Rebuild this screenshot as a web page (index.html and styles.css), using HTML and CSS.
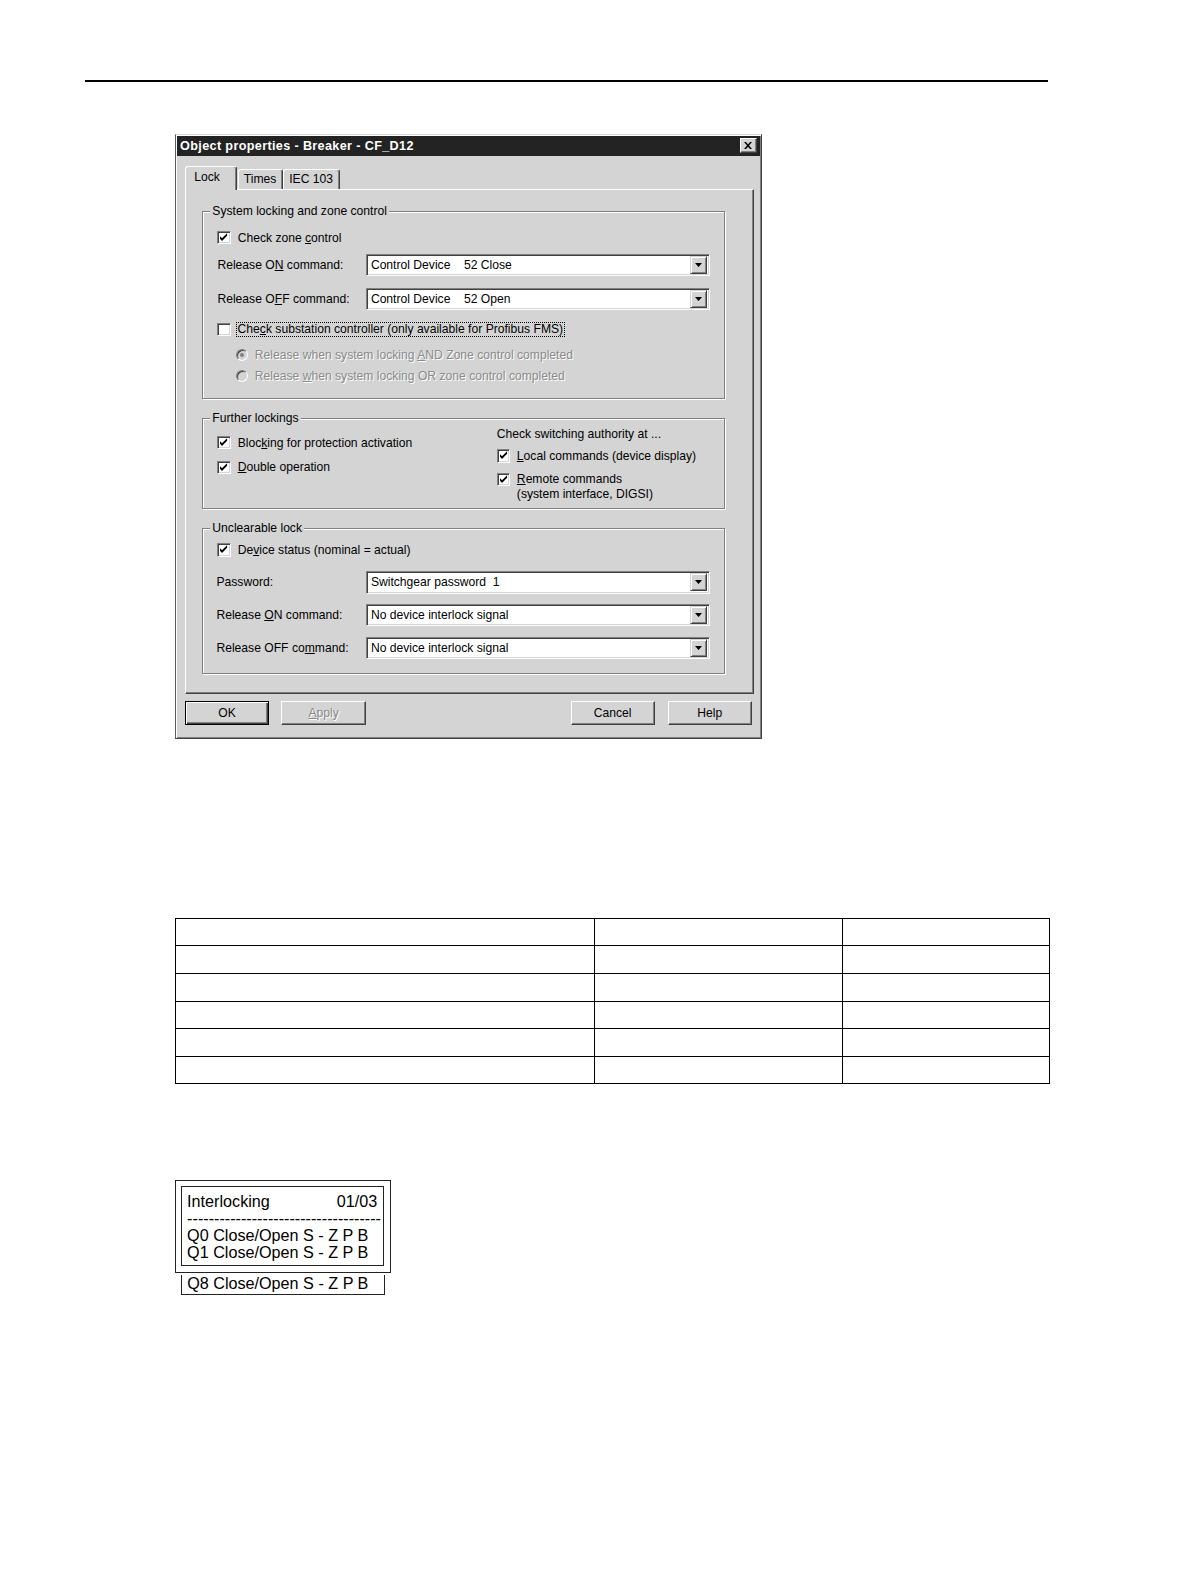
FILE: index.html
```html
<!DOCTYPE html>
<html>
<head>
<meta charset="utf-8">
<title>Object properties - Breaker - CF_D12</title>
<link rel="stylesheet" href="styles.css">
</head>
<body>
<div class="page">
  <div class="rule"></div>

  <div class="dialog">
    <div class="titlebar">
      <span class="title">Object properties - Breaker - CF_D12</span>
      <span class="close"><svg width="8" height="7" viewBox="0 0 8 7"><path d="M0 0h2l2 2.4L6 0h2L5 3.5 8 7H6L4 4.6 2 7H0l3-3.5z" fill="#000"/></svg></span>
    </div>
    <div class="body">
      <div class="tabs">
        <div class="tab active lock">Lock</div>
        <div class="tab times">Times</div>
        <div class="tab iec">IEC 103</div>
      </div>
      <div class="panel">
        <fieldset class="group g1">
          <legend>System locking and zone control</legend>
          <div class="row chkrow sp-11"><span class="cb"><svg width="9" height="9" viewBox="0 0 9 9"><path d="M1 3.2 3 5.2 8 0.2V2.8L3 7.8 1 5.8z" fill="#000"/></svg></span><span class="lbl">Check zone <u>c</u>ontrol</span></div>
          <div class="row selrow sp-8"><span class="flabel">Release O<u>N</u> command:</span><div class="combo"><span class="val"><span class="c1">Control Device</span>52 Close</span><span class="drop"><svg width="7" height="4" viewBox="0 0 7 4"><path d="M0 0h7L3.5 4z" fill="#000"/></svg></span></div></div>
          <div class="row selrow sp-12"><span class="flabel">Release O<u>F</u>F command:</span><div class="combo"><span class="val"><span class="c1">Control Device</span>52 Open</span><span class="drop"><svg width="7" height="4" viewBox="0 0 7 4"><path d="M0 0h7L3.5 4z" fill="#000"/></svg></span></div></div>
          <div class="row chkrow sp-11"><span class="cb"></span><span class="lbl focus">Che<u>c</u>k substation controller (only available for Profibus FMS)</span></div>
          <div class="row radiorow sp-9"><span class="radio on"></span><span class="lbl dis">Release when system locking <u>A</u>ND Zone control completed</span></div>
          <div class="row radiorow sp-5"><span class="radio"></span><span class="lbl dis">Release <u>w</u>hen system locking OR zone control completed</span></div>
        </fieldset>

        <fieldset class="group g2">
          <legend>Further lockings</legend>
          <div class="cols">
            <div class="col">
              <div class="row chkrow sp-10"><span class="cb"><svg width="9" height="9" viewBox="0 0 9 9"><path d="M1 3.2 3 5.2 8 0.2V2.8L3 7.8 1 5.8z" fill="#000"/></svg></span><span class="lbl">Bloc<u>k</u>ing for protection activation</span></div>
              <div class="row chkrow sp-8"><span class="cb"><svg width="9" height="9" viewBox="0 0 9 9"><path d="M1 3.2 3 5.2 8 0.2V2.8L3 7.8 1 5.8z" fill="#000"/></svg></span><span class="lbl"><u>D</u>ouble operation</span></div>
            </div>
            <div class="col">
              <div class="heading">Check switching authority at ...</div>
              <div class="row chkrow sp-7"><span class="cb"><svg width="9" height="9" viewBox="0 0 9 9"><path d="M1 3.2 3 5.2 8 0.2V2.8L3 7.8 1 5.8z" fill="#000"/></svg></span><span class="lbl"><u>L</u>ocal commands (device display)</span></div>
              <div class="row tworow sp-8"><span class="cb"><svg width="9" height="9" viewBox="0 0 9 9"><path d="M1 3.2 3 5.2 8 0.2V2.8L3 7.8 1 5.8z" fill="#000"/></svg></span><span class="lbl"><u>R</u>emote commands<br>(system interface, DIGSI)</span></div>
            </div>
          </div>
        </fieldset>

        <fieldset class="group g3">
          <legend>Unclearable lock</legend>
          <div class="row chkrow sp-7"><span class="cb"><svg width="9" height="9" viewBox="0 0 9 9"><path d="M1 3.2 3 5.2 8 0.2V2.8L3 7.8 1 5.8z" fill="#000"/></svg></span><span class="lbl">De<u>v</u>ice status (nominal = actual)</span></div>
          <div class="row selrow sp-13"><span class="flabel tight">Password:</span><div class="combo"><span class="val">Switchgear password&nbsp; 1</span><span class="drop"><svg width="7" height="4" viewBox="0 0 7 4"><path d="M0 0h7L3.5 4z" fill="#000"/></svg></span></div></div>
          <div class="row selrow sp-10"><span class="flabel tight">Release <u>O</u>N command:</span><div class="combo"><span class="val">No device interlock signal</span><span class="drop"><svg width="7" height="4" viewBox="0 0 7 4"><path d="M0 0h7L3.5 4z" fill="#000"/></svg></span></div></div>
          <div class="row selrow sp-11"><span class="flabel tight">Release OFF co<u>m</u>mand:</span><div class="combo"><span class="val">No device interlock signal</span><span class="drop"><svg width="7" height="4" viewBox="0 0 7 4"><path d="M0 0h7L3.5 4z" fill="#000"/></svg></span></div></div>
        </fieldset>
      </div>

      <div class="buttons">
        <div class="btngroup left">
          <div class="btn default">OK</div>
          <div class="btn disabled"><u>A</u>pply</div>
        </div>
        <div class="btngroup right">
          <div class="btn">Cancel</div>
          <div class="btn">Help</div>
        </div>
      </div>
    </div>
  </div>

  <table class="grid">
    <colgroup><col class="c-a"><col class="c-b"><col class="c-c"></colgroup>
    <tr><td></td><td></td><td></td></tr>
    <tr><td></td><td></td><td></td></tr>
    <tr><td></td><td></td><td></td></tr>
    <tr><td></td><td></td><td></td></tr>
    <tr><td></td><td></td><td></td></tr>
    <tr><td></td><td></td><td></td></tr>
  </table>

  <div class="lcd">
    <div class="screen">
      <div class="line head"><span>Interlocking</span><span>01/03</span></div>
      <div class="line dashes">------------------------------------</div>
      <div class="line">Q0 Close/Open S - Z P B</div>
      <div class="line">Q1 Close/Open S - Z P B</div>
    </div>
  </div>
  <div class="lcd-more">Q8 Close/Open S - Z P B</div>
</div>
</body>
</html>
```

FILE: styles.css
```css
* { box-sizing: border-box; }

html, body { overflow: hidden; }

body {
  margin: 0;
  background: #fff;
  color: #000;
  font-family: "Liberation Sans", Arial, sans-serif;
  font-size: 12px;
}

.page {
  zoom: 1.0117;
  padding-top: 79px;
  padding-bottom: 20px;
}

.rule {
  margin-left: 84px;
  width: 952px;
  height: 2px;
  background: #000;
}

/* ---------- dialog ---------- */
.dialog {
  margin: 51px 0 0 173px;
  width: 580px;
  height: 598px;
  background: #d4d4d4;
  border: 1px solid;
  border-color: #d8d8d8 #404040 #404040 #5a5a5a;
  box-shadow: inset 1px 1px 0 #fff, inset -1px -1px 0 #808080;
  padding: 1px;
}

.titlebar {
  height: 20px;
  background: #232323;
  color: #fff;
  font-weight: bold;
  font-size: 12.5px;
  letter-spacing: 0.35px;
  display: flex;
  align-items: center;
  justify-content: space-between;
  padding: 0 3px 0 3px;
}

.close {
  width: 17px;
  height: 15px;
  background: #d4d4d4;
  border: 1px solid;
  border-color: #fff #404040 #404040 #fff;
  box-shadow: inset -1px -1px 0 #808080;
  display: flex;
  align-items: center;
  justify-content: center;
}

.body {
  padding: 10px 6px 0 8px;
}

.tabs {
  display: flex;
  align-items: flex-end;
  height: 23px;
}

.tab {
  height: 20px;
  border: 1px solid;
  border-bottom: none;
  border-color: #fff #404040 transparent #fff;
  box-shadow: inset -1px 0 0 #808080;
  border-radius: 3px 3px 0 0;
  padding: 2px 0 0 5px;
  line-height: 14px;
}

.tab.active {
  height: 24px;
  margin-bottom: -1px;
  position: relative;
  z-index: 1;
  background: #d4d4d4;
  padding: 3px 0 0 8px;
}

.tab.lock { width: 51px; margin-left: 0; }
.tab.times { width: 45px; margin-left: 1px; }
.tab.iec { width: 56px; }

.panel {
  height: 499px;
  border: 1px solid;
  border-color: #fff #404040 #404040 #fff;
  box-shadow: inset -1px -1px 0 #808080;
  padding: 15px 0 0 16px;
}

/* group boxes */
.group {
  margin: 0;
  width: 517px;
  min-inline-size: 0;
  border: 1px solid #808080;
  box-shadow: inset 1px 1px 0 #fff, 1px 1px 0 #fff;
  padding: 0 14px 14px 14px;
}

.group legend {
  padding: 0 2px;
  margin-left: -7px;
  line-height: 13px;
  background: #d4d4d4;
}

.g2 { margin-top: 12px; padding-bottom: 5px; }
.g3 { margin-top: 13px; }

.row {
  display: flex;
  align-items: center;
}

.chkrow, .radiorow { height: 16px; }
.selrow { height: 22px; }
.radiorow { padding-left: 18px; }

.tworow {
  align-items: flex-start;
  line-height: 15px;
}
.tworow .cb { margin-top: 1px; }

.sp-5 { margin-top: 5px; }
.sp-7 { margin-top: 7px; }
.sp-8 { margin-top: 8px; }
.sp-9 { margin-top: 9px; }
.sp-10 { margin-top: 10px; }
.sp-11 { margin-top: 11px; }
.sp-12 { margin-top: 12px; }
.sp-13 { margin-top: 13px; }

.cb {
  flex: none;
  width: 13px;
  height: 13px;
  background: #fff;
  border: 1px solid;
  border-color: #808080 #fff #fff #808080;
  box-shadow: inset 1px 1px 0 #404040, inset -1px -1px 0 #d4d4d4;
  display: flex;
  align-items: center;
  justify-content: center;
}

.lbl { margin-left: 7px; white-space: nowrap; }

.lbl.focus {
  margin-left: 5px;
  padding: 0 1px;
  border: 1px dotted #000;
  line-height: 13px;
}

.lbl.dis {
  color: #8a8a8a;
  text-shadow: 1px 1px 0 #fff;
}

.radio {
  flex: none;
  width: 12px;
  height: 12px;
  border-radius: 50%;
  border: 1px solid;
  border-color: #808080 #fff #fff #808080;
  box-shadow: inset 1px 1px 0 #404040;
  background: #d4d4d4;
  display: flex;
  align-items: center;
  justify-content: center;
}

.radio.on::after {
  content: "";
  width: 4px;
  height: 4px;
  border-radius: 50%;
  background: #808080;
}

.flabel {
  width: 147px;
  white-space: nowrap;
}
.flabel.tight { margin-left: -1px; width: 148px; }

.combo {
  width: 341px;
  height: 22px;
  background: #fff;
  border: 1px solid;
  border-color: #808080 #fff #fff #808080;
  box-shadow: inset 1px 1px 0 #404040, inset -1px -1px 0 #d4d4d4;
  padding: 2px 2px 2px 4px;
  display: flex;
  align-items: center;
  justify-content: space-between;
}

.val { white-space: nowrap; }
.c1 { display: inline-block; width: 92px; }

.drop {
  width: 17px;
  height: 18px;
  background: #d4d4d4;
  border: 1px solid;
  border-color: #d4d4d4 #404040 #404040 #d4d4d4;
  box-shadow: inset 1px 1px 0 #fff, inset -1px -1px 0 #808080;
  display: flex;
  align-items: center;
  justify-content: center;
}

.cols {
  display: grid;
  grid-template-columns: 276px 1fr;
}

.heading {
  margin-top: 2px;
  line-height: 14px;
}

/* buttons */
.buttons {
  display: flex;
  justify-content: space-between;
  margin-top: 7px;
  padding-right: 2px;
}

.btngroup { display: flex; }
.btngroup.left { gap: 12px; }
.btngroup.right { gap: 13px; }

.btn {
  width: 83px;
  height: 24px;
  background: #d4d4d4;
  border: 1px solid;
  border-color: #fff #404040 #404040 #fff;
  box-shadow: inset -1px -1px 0 #808080;
  display: flex;
  align-items: center;
  justify-content: center;
}

.btn.default {
  border: 1px solid #000;
  box-shadow: inset 1px 1px 0 #fff, inset -1px -1px 0 #404040, inset -2px -2px 0 #808080;
}

.btn.disabled {
  width: 84px;
  color: #8a8a8a;
  text-shadow: 1px 1px 0 #fff;
}

/* ---------- table ---------- */
.grid {
  margin: 177px 0 0 173px;
  border-collapse: collapse;
  width: 864px;
  table-layout: fixed;
}

.c-a { width: 414px; }
.c-b { width: 245px; }
.c-c { width: 205px; }

.grid td {
  border: 1px solid #000;
  height: 27.33px;
  padding: 0;
}

/* ---------- display ---------- */
.lcd {
  margin: 94px 0 0 173px;
  width: 213px;
  height: 92px;
  border: 1px solid #222;
  padding: 5px;
}

.screen {
  width: 201px;
  height: 80px;
  border: 1px solid #222;
  padding: 6px 6px 0 5px;
  font-size: 16px;
  line-height: 17px;
}

.line { white-space: nowrap; }
.line.head { display: flex; justify-content: space-between; }

.lcd-more {
  margin: 2px 0 0 179px;
  width: 202px;
  height: 20px;
  border: 1px solid #222;
  border-top: none;
  padding: 0 0 0 5px;
  font-size: 16px;
  line-height: 17px;
  white-space: nowrap;
}
```
